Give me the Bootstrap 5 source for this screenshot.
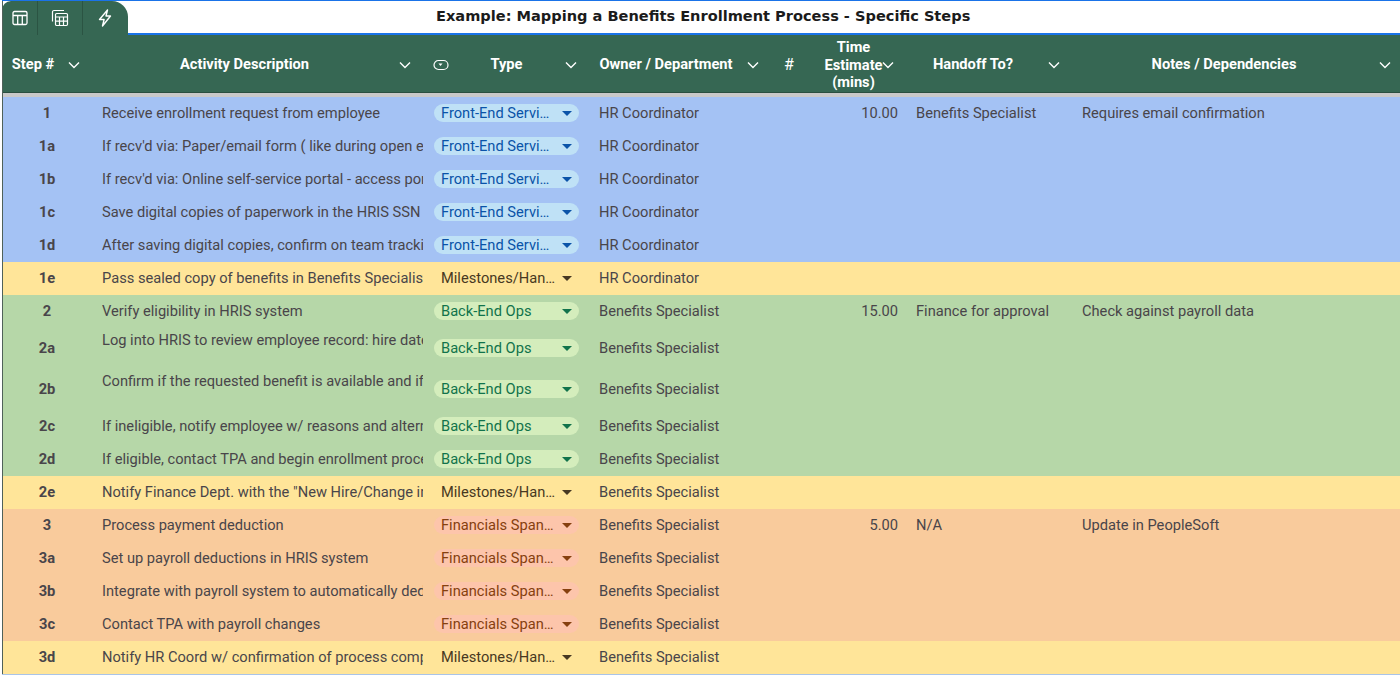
<!DOCTYPE html>
<html lang="en">
<head>
<meta charset="utf-8">
<title>Benefits Enrollment Process</title>
<link href="https://cdn.jsdelivr.net/npm/bootstrap@5.3.0/dist/css/bootstrap.min.css" rel="stylesheet">
<style>
html,body{height:675px;overflow:hidden;background:#fff;}
body{font-family:Roboto,"Liberation Sans",sans-serif;font-size:14.67px;color:#49454a;}
.sheet{position:relative;height:675px;padding-left:2px;}
.titlebar{height:35px;border-top:1.5px solid #1a73e8;border-bottom:2px solid #1a73e8;}
.titletext{font-family:"DejaVu Sans",Verdana,sans-serif;font-weight:700;font-size:14.57px;color:#1b1b1b;padding-left:434px;line-height:30px;white-space:nowrap;}
.tabs{left:2px;width:126px;height:34px;background:#366753;border-top-left-radius:9px;border-top-right-radius:16px;margin-top:1px;}
.tabcell{height:34px;border-right:1px solid #2b5443;color:#fff;}
.tabcell svg{display:block;}
.tc1{width:36px}.tc2{width:45px}.tc3{width:44px;border-right:0}
.grid-table{table-layout:fixed;width:1398px;margin:0;border-collapse:separate;border-spacing:0;color:#49454a;}
.grid-table>:not(caption)>*>*{padding:0;background:transparent;color:inherit;border:0;box-shadow:none;}
.c1{width:92px}.c2{width:334px}.c3{width:165px}.c4{width:177px}.c5{width:38px}.c6{width:102px}.c7{width:166px}.c8{width:324px}
.headrow{background:#366753;height:58px;}
.headrow th{color:#fff;font-weight:700;font-size:14.67px;vertical-align:middle;line-height:17.5px;border-bottom:1px solid #2b4f40!important;}
.headinner{display:flex;align-items:center;height:57px;padding-top:2px;}
.headlabel{flex:1;text-align:center;}
.timelabel{padding-left:12px;padding-top:2px;}
.hash{font-weight:400;font-size:16px;}
.chev{flex:none;display:block;}
.ch1{margin-left:3px;margin-right:13px}.ch2{margin-left:3px;margin-right:16px}.ch3{margin-right:15px}.ch4{margin-left:7px;margin-right:10px}.ch6{margin-left:-6px;margin-right:15px}.ch7{margin-left:11px;margin-right:15px}.ch8{margin-left:6px;margin-right:8px}
.typeicon{margin-left:5px}
.sep th{height:4px;background:#c9c9c9!important;padding:0;}
.sep{height:4px;}
.rb{background:#a4c2f4;}
.ry{background:#ffe599;}
.rg{background:#b6d7a8;}
.ro{background:#f9cb9c;}
.rn{height:33px;}
.rt{height:41px;}
.grid-table td{vertical-align:middle;line-height:17px;white-space:nowrap;overflow:hidden;}
.grid-table>tbody>tr>.stepno{font-weight:700;text-align:center;padding-right:2px;}
.clip{display:block;overflow:hidden;width:321px;margin-left:8px;white-space:nowrap;}
.rt .clip{height:34px;}
.pill{display:flex;align-items:center;width:145px;height:18px;margin-left:6px;margin-top:-1px;border-radius:9px;padding:0 6px 0 7px;}
.pilltext{width:114px;overflow:hidden;white-space:nowrap;text-overflow:ellipsis;position:relative;top:.5px;}
.caret{margin-left:auto;margin-right:1px;width:0;height:0;border-left:5px solid transparent;border-right:5px solid transparent;border-top:5px solid currentColor;}
.pf{background:#bfe1f6;color:#0a53a8;}
.pb{background:#d4edbc;color:#11734b;}
.pm{color:#473822;}
.pm .pilltext{width:118px;}
.ps{background:#fdc5ab;color:#86400f;}
.grid-table>tbody>tr>.num{text-align:right;padding-right:12px;}
.grid-table>tbody>tr>.ptext{padding-left:6px;}
.frame{position:absolute;left:2px;top:1px;width:1px;height:673px;background:#4f6159;z-index:2;}
.bline{height:1px;background:#a9c4e8;}
</style>
</head>
<body>
<div class="sheet">
<div class="frame"></div>
<div class="titlebar d-flex">
  <div class="titletext">Example: Mapping a Benefits Enrollment Process - Specific Steps</div>
</div>
<div class="tabs d-flex position-absolute top-0">
  <div class="tabcell tc1 d-flex align-items-center justify-content-center">
    <svg width="16" height="16" viewBox="0 0 16 16" fill="none" stroke="#fff" stroke-width="1.3"><rect x="1" y="1.5" width="14" height="13" rx="1.5"/><path d="M1 5.5h14M5.7 5.5v9M10.3 5.5v9"/></svg>
  </div>
  <div class="tabcell tc2 d-flex align-items-center justify-content-center">
    <svg width="18" height="18" viewBox="0 0 18 18" fill="none" stroke="#fff" stroke-width="1.2"><path d="M1.5 12.5V3a1.5 1.5 0 0 1 1.5-1.5h10"/><rect x="4.5" y="4.5" width="12" height="12" rx="1.2"/><path d="M4.5 8h12M4.5 12.2h12M8.5 8v8.5M12.5 8v8.5"/></svg>
  </div>
  <div class="tabcell tc3 d-flex align-items-center justify-content-center">
    <svg width="14" height="18" viewBox="0 0 14 18" fill="none" stroke="#fff" stroke-width="1.4" stroke-linejoin="round"><path d="M9.5 1 1.5 10.5h4.6L4.5 17l8-10H8z"/></svg>
  </div>
</div>
<table class="table grid-table">
<colgroup><col class="c1"><col class="c2"><col class="c3"><col class="c4"><col class="c5"><col class="c6"><col class="c7"><col class="c8"></colgroup>
<thead>
<tr class="headrow">
<th><div class="headinner"><span class="headlabel">Step #</span><svg class="chev ch1" width="14" height="14" viewBox="0 0 14 14" fill="none" stroke="#fff" stroke-width="1.4"><path d="M2 4.5 7 9.5l5-5"/></svg></div></th>
<th><div class="headinner"><span class="headlabel">Activity Description</span><svg class="chev ch2" width="14" height="14" viewBox="0 0 14 14" fill="none" stroke="#fff" stroke-width="1.4"><path d="M2 4.5 7 9.5l5-5"/></svg></div></th>
<th><div class="headinner"><svg class="chev typeicon" width="16" height="12" viewBox="0 0 16 12" fill="none" stroke="#fff" stroke-width="1.2"><rect x="1" y="1.5" width="14" height="9" rx="4.5"/><path d="M5.5 4.5h4L7.5 7z" fill="#fff" stroke="none"/></svg><span class="headlabel">Type</span><svg class="chev ch3" width="14" height="14" viewBox="0 0 14 14" fill="none" stroke="#fff" stroke-width="1.4"><path d="M2 4.5 7 9.5l5-5"/></svg></div></th>
<th><div class="headinner"><span class="headlabel">Owner / Department</span><svg class="chev ch4" width="14" height="14" viewBox="0 0 14 14" fill="none" stroke="#fff" stroke-width="1.4"><path d="M2 4.5 7 9.5l5-5"/></svg></div></th>
<th><div class="headinner"><span class="headlabel hash">#</span></div></th>
<th><div class="headinner"><span class="headlabel timelabel">Time<br>Estimate<br>(mins)</span><svg class="chev ch6" width="14" height="14" viewBox="0 0 14 14" fill="none" stroke="#fff" stroke-width="1.4"><path d="M2 4.5 7 9.5l5-5"/></svg></div></th>
<th><div class="headinner"><span class="headlabel">Handoff To?</span><svg class="chev ch7" width="14" height="14" viewBox="0 0 14 14" fill="none" stroke="#fff" stroke-width="1.4"><path d="M2 4.5 7 9.5l5-5"/></svg></div></th>
<th><div class="headinner"><span class="headlabel">Notes / Dependencies</span><svg class="chev ch8" width="14" height="14" viewBox="0 0 14 14" fill="none" stroke="#fff" stroke-width="1.4"><path d="M2 4.5 7 9.5l5-5"/></svg></div></th>
</tr>
<tr class="sep"><th colspan="8"></th></tr>
</thead>
<tbody id="rows"></tbody>
</table>
<div class="bline"></div>
</div>
<script>
var F='Front-End Services',B='Back-End Ops',M='Milestones/Handoffs',S='Financials Spanning';
var HR='HR Coordinator',BS='Benefits Specialist';
var rows=[
['rb','1','Receive enrollment request from employee',F,HR,'10.00','Benefits Specialist','Requires email confirmation'],
['rb','1a',"If recv'd via: Paper/email form ( like during open enrollment, a paper form is submitted)",F,HR],
['rb','1b',"If recv'd via: Online self-service portal - access portal and download the request",F,HR],
['rb','1c','Save digital copies of paperwork in the HRIS SSN folder for the employee record',F,HR],
['rb','1d','After saving digital copies, confirm on team tracking sheet and notify the team',F,HR],
['ry','1e','Pass sealed copy of benefits in Benefits Specialist inbox for processing',M,HR],
['rg','2','Verify eligibility in HRIS system',B,BS,'15.00','Finance for approval','Check against payroll data'],
['rg rt','2a','Log into HRIS to review employee record: hire date, status, and job classification',B,BS],
['rg rt','2b','Confirm if the requested benefit is available and if the employee is qualified',B,BS],
['rg','2c','If ineligible, notify employee w/ reasons and alternatives for appeal',B,BS],
['rg','2d','If eligible, contact TPA and begin enrollment process for the benefit',B,BS],
['ry','2e','Notify Finance Dept. with the "New Hire/Change in Benefit" form for approval',M,BS],
['ro','3','Process payment deduction',S,BS,'5.00','N/A','Update in PeopleSoft'],
['ro','3a','Set up payroll deductions in HRIS system',S,BS],
['ro','3b','Integrate with payroll system to automatically deduct each pay period',S,BS],
['ro','3c','Contact TPA with payroll changes',S,BS],
['ry','3d','Notify HR Coord w/ confirmation of process completion and close the request',M,BS]
];
var cls={};cls[F]='pf';cls[B]='pb';cls[M]='pm';cls[S]='ps';
var h='';
rows.forEach(function(r){
 var rt=r[0].indexOf('rt')>=0;
 h+='<tr class="'+r[0]+(rt?'':' rn')+'">'
 +'<td class="stepno">'+r[1]+'</td>'
 +'<td><span class="clip">'+r[2]+'</span></td>'
 +'<td><div class="pill '+cls[r[3]]+'"><span class="pilltext">'+r[3]+'</span><span class="caret"></span></div></td>'
 +'<td class="ptext">'+r[4]+'</td><td></td>'
 +'<td class="num">'+(r[5]||'')+'</td>'
 +'<td class="ptext">'+(r[6]||'')+'</td>'
 +'<td class="ptext">'+(r[7]||'')+'</td></tr>';
});
document.getElementById('rows').innerHTML=h;
</script>
<script src="https://cdn.jsdelivr.net/npm/bootstrap@5.3.0/dist/js/bootstrap.bundle.min.js"></script>
</body>
</html>
